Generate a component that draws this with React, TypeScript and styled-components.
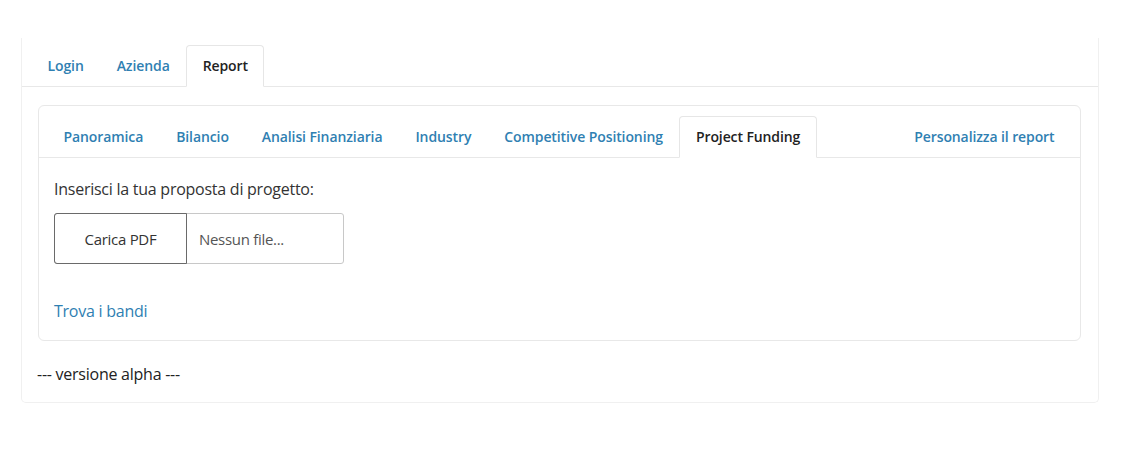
import React from "react";
import styled, { createGlobalStyle } from "styled-components";

const topTabs = ["Login", "Azienda", "Report"];
const reportTabs = [
  "Panoramica",
  "Bilancio",
  "Analisi Finanziaria",
  "Industry",
  "Competitive Positioning",
  "Project Funding",
];

const App = () => {
  return (
    <>
      <GlobalStyle />
      <Page>
        <Panel>
          <TopNav>
            {topTabs.map((t) => (
              <Tab key={t} $active={t === "Report"}>
                {t}
              </Tab>
            ))}
          </TopNav>
          <Card>
            <CardNav>
              {reportTabs.map((t) => (
                <Tab key={t} $active={t === "Project Funding"}>
                  {t}
                </Tab>
              ))}
              <Spacer />
              <Tab>Personalizza il report</Tab>
            </CardNav>
            <CardBody>
              <Label>Inserisci la tua proposta di progetto:</Label>
              <FileInput>
                <FileButton>Carica PDF</FileButton>
                <FileName>Nessun file...</FileName>
              </FileInput>
              <LinkText>Trova i bandi</LinkText>
            </CardBody>
          </Card>
          <Footer>--- versione alpha ---</Footer>
        </Panel>
      </Page>
    </>
  );
};

export default App;

const GlobalStyle = createGlobalStyle`
  body {
    margin: 0;
    background: #ffffff;
    font-family: "Open Sans", "Liberation Sans", sans-serif;
    color: #333333;
  }
`;

const Page = styled.div`
  padding: 38px 0 0 21px;
`;

const Panel = styled.div`
  width: 1076px;
  height: 364px;
  border: 1px solid #f0f0f0;
  border-top: none;
  border-radius: 0 0 5px 5px;
  display: flex;
  flex-direction: column;
`;

const TopNav = styled.div`
  display: flex;
  align-items: flex-end;
  height: 48px;
  padding-left: 9px;
  border-bottom: 1px solid #e8e8e8;
`;

const Tab = styled.div<{ $active?: boolean }>`
  height: 42px;
  box-sizing: border-box;
  display: flex;
  align-items: center;
  padding: 0 15.5px 2px;
  margin-bottom: -1px;
  font-size: 14px;
  font-weight: 600;
  letter-spacing: -0.1px;
  color: ${(p) => (p.$active ? "#222222" : "#2f80b2")};
  background: ${(p) => (p.$active ? "#ffffff" : "transparent")};
  border: 1px solid ${(p) => (p.$active ? "#e6e6e6" : "transparent")};
  border-bottom-color: ${(p) => (p.$active ? "#ffffff" : "transparent")};
  border-radius: 4px 4px 0 0;
  white-space: nowrap;
`;

const Card = styled.div`
  margin: 18px 0 0 16px;
  width: 1043px;
  height: 236px;
  box-sizing: border-box;
  border: 1px solid #e8e8e8;
  border-radius: 6px;
  display: flex;
  flex-direction: column;
`;

const CardNav = styled.div`
  display: flex;
  align-items: flex-end;
  height: 52px;
  box-sizing: border-box;
  padding: 0 9px 0 8px;
  border-bottom: 1px solid #e8e8e8;
`;

const Spacer = styled.div`
  flex: 1;
`;

const CardBody = styled.div`
  padding: 20px 15px 0;
  display: flex;
  flex-direction: column;
  align-items: flex-start;
`;

const Label = styled.div`
  font-size: 16px;
  line-height: 22px;
  letter-spacing: -0.25px;
  color: #333333;
`;

const FileInput = styled.div`
  margin-top: 13px;
  display: flex;
  width: 290px;
  height: 51px;
  box-sizing: border-box;
  border: 1px solid #c8c8c8;
  border-radius: 3px;
  font-size: 15px;
  letter-spacing: -0.3px;
`;

const FileButton = styled.div`
  width: 133px;
  margin: -1px 0 -1px -1px;
  box-sizing: border-box;
  border: 1px solid #6a6a6a;
  border-radius: 3px 0 0 3px;
  display: flex;
  align-items: center;
  justify-content: center;
  color: #333333;
`;

const FileName = styled.div`
  display: flex;
  align-items: center;
  padding-left: 12px;
  color: #555555;
`;

const LinkText = styled.div`
  margin-top: 36px;
  font-size: 16px;
  letter-spacing: -0.25px;
  color: #2f80b2;
`;

const Footer = styled.div`
  margin: 22px 0 0 15px;
  font-size: 16px;
  letter-spacing: -0.25px;
  color: #222222;
`;
